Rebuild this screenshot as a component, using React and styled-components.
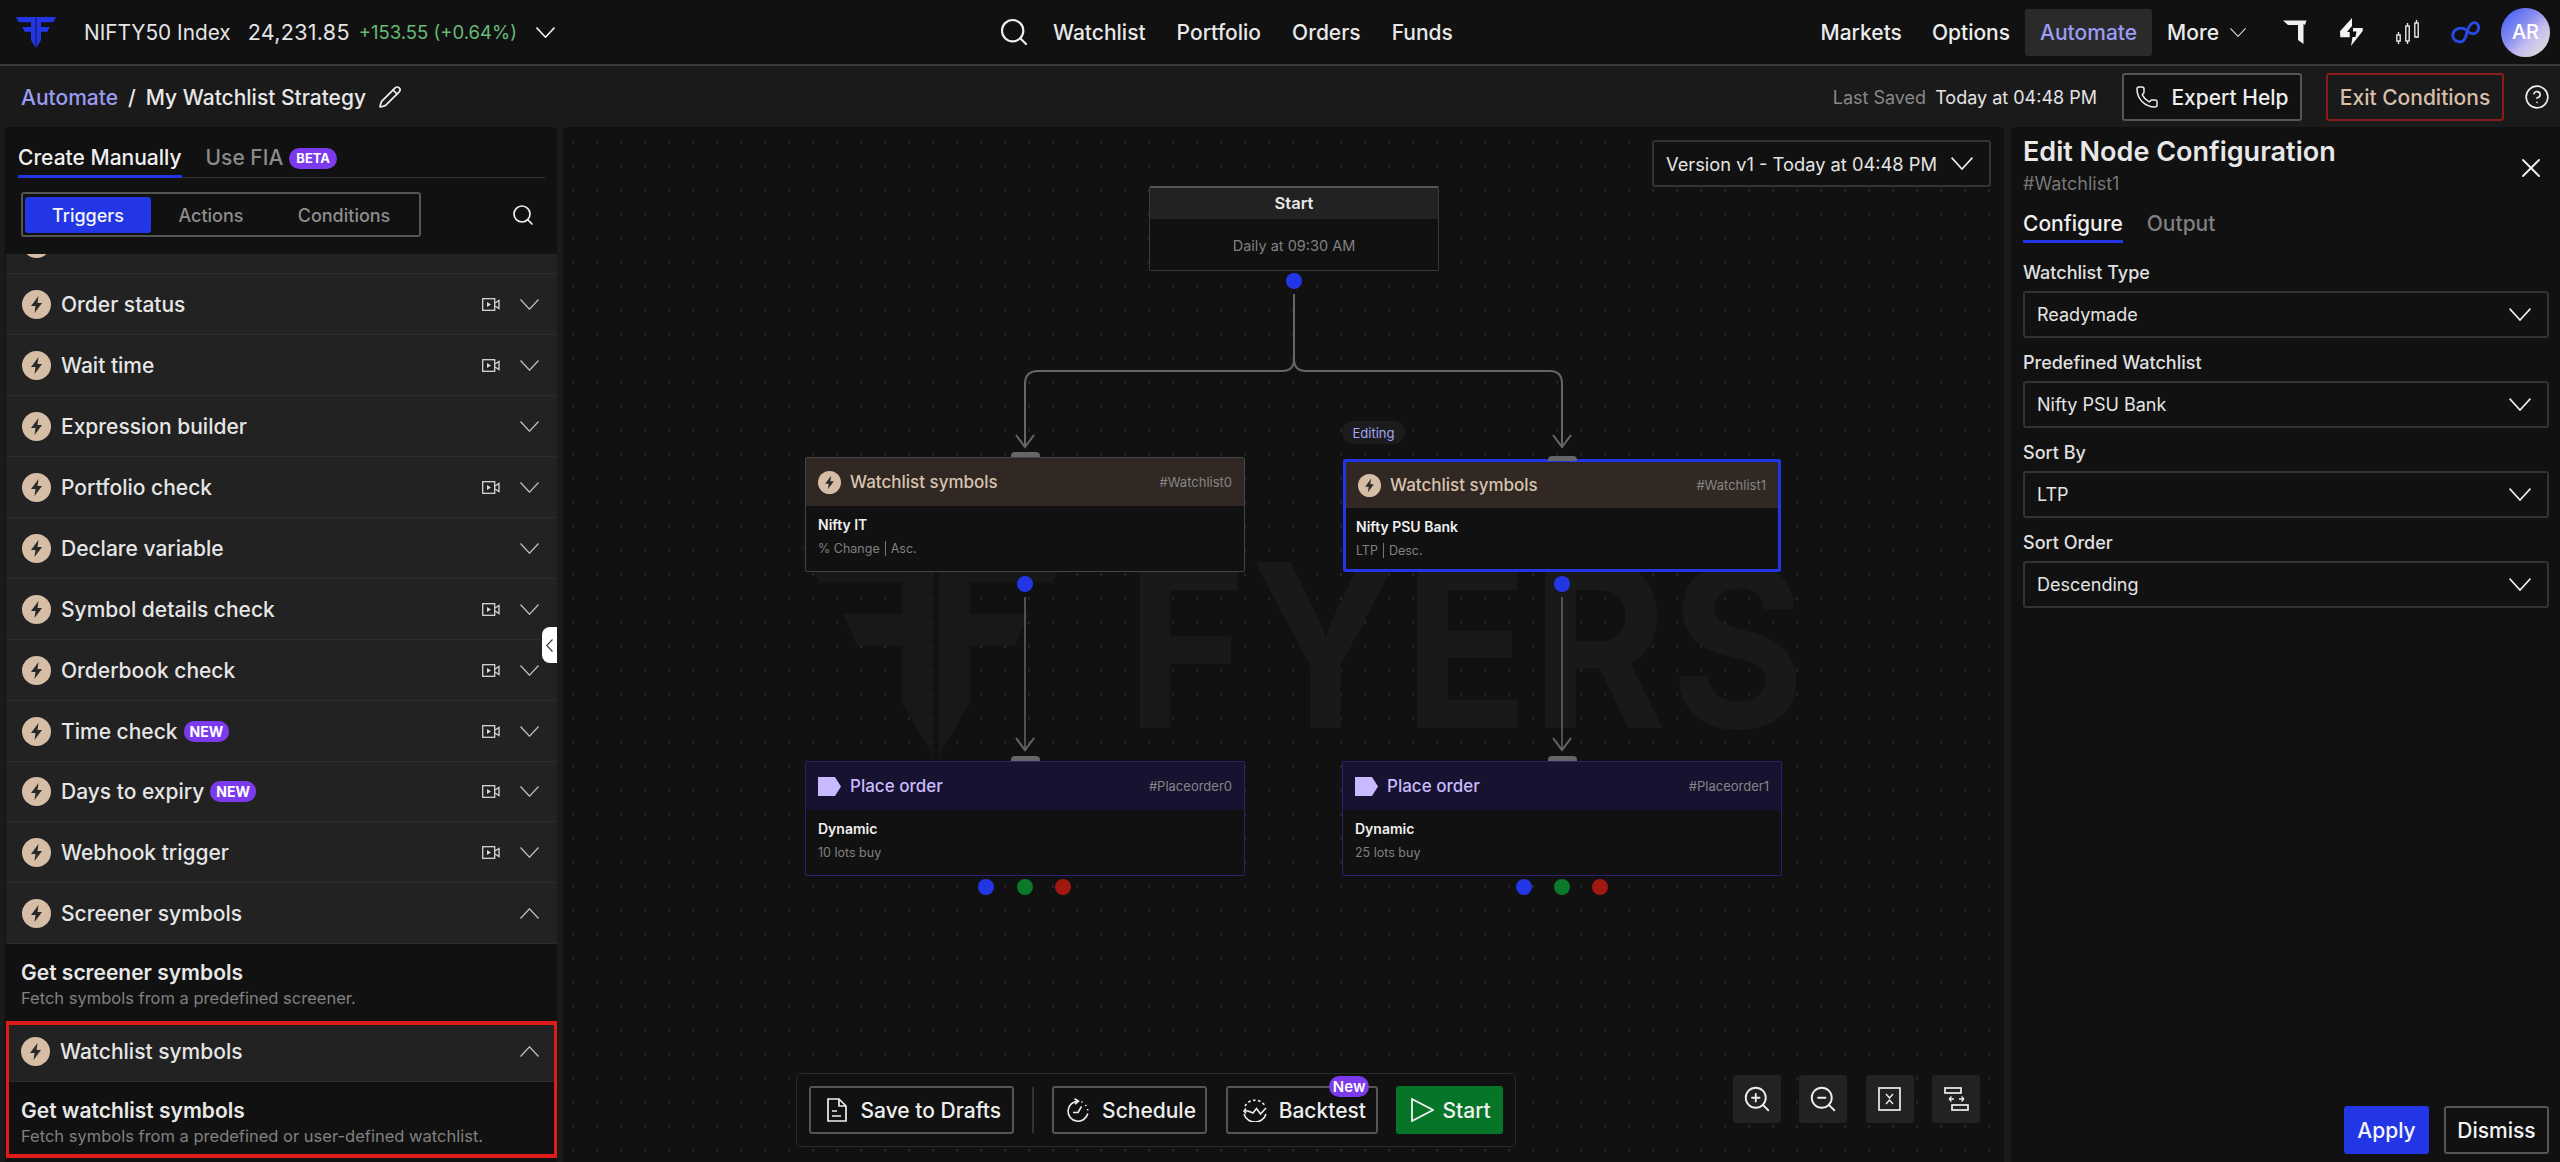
import React from 'react';
import styled, { createGlobalStyle } from 'styled-components';
import { Search, Pencil, Phone, CircleHelp, X, ZoomIn, ZoomOut } from 'lucide-react';

const GlobalStyle = createGlobalStyle`
  html, body { margin: 0; padding: 0; background: #1a1a1a; }
  * { box-sizing: border-box; }
  body { font-family: Inter, "Noto Sans", sans-serif; color: #e8e8e8; }
`;

const Page = styled.div`
  width: 2560px;
  height: 1162px;
  display: flex;
  flex-direction: column;
  overflow: hidden;
`;

const TopBar = styled.header`
  height: 66px;
  flex: none;
  display: flex;
  align-items: center;
  background: #111;
  border-bottom: 2px solid #3a3a3a;
  padding: 0 10px 0 16px;
`;

const LeftGroup = styled.div`
  width: 982px;
  flex: none;
  display: flex;
  align-items: center;
`;

const IndexName = styled.span`
  font-size: 20.8px;
  margin-left: 28px;
  color: #e4e4e4;
`;

const IndexPrice = styled.span`
  font-size: 21.5px;
  letter-spacing: 0.3px;
  margin-left: 17px;
  color: #e4e4e4;
`;

const IndexChange = styled.span`
  font-size: 18.5px;
  margin-left: 9px;
  color: #66bb77;
`;

const CenterGroup = styled.nav`
  display: flex;
  align-items: center;
  gap: 31px;
  flex: 1;
  font-size: 21px;
  font-weight: 500;
`;

const SearchSlot = styled.span`
  display: flex;
  margin-right: -8px;
`;

const RightGroup = styled.div`
  display: flex;
  align-items: center;
`;

const NavLink = styled.span`
  font-size: 21px;
  font-weight: 500;
  color: ${(p) => (p.$active ? '#9a9cf4' : '#ececec')};
  background: ${(p) => (p.$active ? '#2a2a2a' : 'transparent')};
  border-radius: 3px;
  height: 47px;
  display: flex;
  align-items: center;
  padding: 0 15px;
`;

const IconSlot = styled.span`
  display: flex;
  align-items: center;
  justify-content: center;
  margin-left: ${(p) => p.$ml || 0}px;
`;

const Avatar = styled.div`
  width: 49px;
  height: 49px;
  border-radius: 50%;
  margin-left: 21px;
  background: linear-gradient(135deg, #4f68f6 12%, #8b90ef 42%, #c4bcf0 62%, #d8d8dc 85%);
  display: flex;
  align-items: center;
  justify-content: center;
  color: #fff;
  font-size: 20px;
  font-weight: 500;
`;

const SubBar = styled.div`
  height: 61px;
  flex: none;
  display: flex;
  align-items: center;
  padding: 1px 10px 0 21px;
  background: #1a1a1a;
`;

const Crumb = styled.span`
  font-size: 21px;
  font-weight: 500;
  color: ${(p) => (p.$link ? '#9a9cf4' : '#e8e8e8')};
  margin-right: ${(p) => p.$mr || 0}px;
`;

const Spacer = styled.div`
  flex: 1;
`;

const SavedLabel = styled.span`
  font-size: 18px;
  color: #888;
  margin-right: 9px;
`;

const SavedValue = styled.span`
  font-size: 18px;
  color: #e4e4e4;
  margin-right: 25px;
`;

const OutlineButton = styled.button`
  font: 500 21px Inter, sans-serif;
  height: 48px;
  display: flex;
  align-items: center;
  justify-content: center;
  gap: 12px;
  background: #111;
  color: #eee;
  border: 2px solid #555;
  border-radius: 3px;
  padding: 0;
  width: ${(p) => p.$w}px;
`;

const ExitButton = styled(OutlineButton)`
  background: transparent;
  color: #d8bfa8;
  border-color: #8a1c1c;
  margin-left: 24px;
`;

const Body = styled.div`
  flex: 1;
  min-height: 0;
  display: flex;
  padding-left: 5px;
`;

const LeftPanel = styled.aside`
  width: 552px;
  flex: none;
  background: #111;
  border-radius: 4px 4px 0 0;
  display: flex;
  flex-direction: column;
  position: relative;
`;

const TabRow = styled.div`
  display: flex;
  align-items: flex-end;
  height: 51px;
  margin: 0 12px 0 13px;
  border-bottom: 1px solid #333;
  gap: 24px;
`;

const Tab = styled.div`
  padding: 17px 0 4px;
  line-height: 26px;
  font-size: 21px;
  font-weight: 500;
  color: ${(p) => (p.$active ? '#f0f0f0' : '#8a8a8a')};
  border-bottom: ${(p) => (p.$active ? '3px solid #2336e6' : '3px solid transparent')};
  margin-bottom: -1px;
  display: flex;
  gap: 6px;
  align-items: center;
`;

const Beta = styled.span`
  background: #7c3aed;
  color: #fff;
  font-size: 13px;
  font-weight: 700;
  border-radius: 11px;
  padding: 0 7px;
  height: 21px;
  line-height: 21px;
`;

const SegmentRow = styled.div`
  display: flex;
  align-items: center;
  justify-content: space-between;
  padding: 14px 22px 17px 16px;
`;

const Segment = styled.div`
  width: 400px;
  height: 45px;
  border: 2px solid #555;
  border-radius: 3px;
  display: flex;
  align-items: center;
  padding: 0 2px;
`;

const SegmentItem = styled.div`
  height: 36px;
  padding-top: 1px;
  width: ${(p) => p.$w}px;
  display: flex;
  align-items: center;
  justify-content: center;
  font-size: 18px;
  font-weight: 500;
  border-radius: 3px;
  color: ${(p) => (p.$active ? '#f4f4f4' : '#8e8e8e')};
  background: ${(p) => (p.$active ? '#2336e6' : 'transparent')};
`;

const List = styled.div`
  flex: 1;
  min-height: 0;
  overflow: hidden;
  margin-left: 1px;
`;

const Row = styled.div`
  height: 60.9px;
  margin-top: ${(p) => p.$mt || 0}px;
  display: flex;
  align-items: center;
  background: #222;
  border-bottom: 1px solid #2b2b2b;
  padding: 1px 18px 0 16px;
`;

const RowTitle = styled.span`
  font-size: 21px;
  font-weight: 500;
  color: #e6e6e6;
  margin-left: 10px;
`;

const NewBadge = styled.span`
  background: #7c3aed;
  color: #fff;
  font-size: 14px;
  font-weight: 700;
  border-radius: 10px;
  height: 21px;
  line-height: 21px;
  padding: 0 6px;
  margin-left: 6px;
`;

const RowRight = styled.div`
  margin-left: auto;
  display: flex;
  align-items: center;
  gap: 20px;
`;

const Section = styled.div`
  background: #111;
  padding: ${(p) => p.$pad};
  height: ${(p) => p.$h}px;
`;

const ItemTitle = styled.div`
  font-size: 21px;
  font-weight: 600;
  line-height: 26px;
  color: #e8e8e8;
`;

const ItemDesc = styled.div`
  font-size: 16.5px;
  line-height: 20px;
  margin-top: 2px;
  color: #808080;
`;

const Highlight = styled.div`
  position: relative;
  height: 137px;
  margin: 0 -1px;
  ${Row} {
    padding: 1px 19px 0 16px;
  }
`;

const HighlightFrame = styled.div`
  position: absolute;
  inset: 0;
  border: 4px solid #e01b1b;
  pointer-events: none;
`;

const CollapseHandle = styled.div`
  position: absolute;
  right: 0;
  top: 500px;
  width: 15px;
  height: 36px;
  background: #fff;
  border-radius: 8px 0 0 8px;
  display: flex;
  align-items: center;
  justify-content: center;
`;

const Canvas = styled.main`
  width: 1441px;
  flex: none;
  margin-left: 6px;
  margin-right: 7px;
  position: relative;
  overflow: hidden;
  border-radius: 4px 4px 0 0;
  background-color: #111;
  background-image: radial-gradient(circle, #2e2e2e 1px, transparent 1.3px);
  background-size: 24px 24px;
  background-position: -2px 3.5px;
`;

const Wordmark = styled.div`
  position: absolute;
  left: 563px;
  top: 404px;
  font-size: 228px;
  line-height: 1;
  font-weight: 700;
  letter-spacing: 4px;
  color: #191919;
  transform: scaleX(0.9);
  transform-origin: left top;
`;

const WatermarkSlot = styled.div`
  position: absolute;
  left: 237px;
  top: 419px;
  display: flex;
`;

const Edges = styled.svg`
  position: absolute;
  left: 0;
  top: 0;
`;

const VersionSelect = styled.div`
  position: absolute;
  right: 13px;
  top: 13px;
  width: 339px;
  height: 47px;
  background: #111;
  border: 2px solid #333;
  border-radius: 3px;
  display: flex;
  align-items: center;
  justify-content: space-between;
  padding: 0 16px 0 12px;
  font-size: 18.3px;
  color: #e4e4e4;
`;

const StartNode = styled.div`
  position: absolute;
  left: 586px;
  top: 59px;
  width: 290px;
  height: 85px;
  background: #111;
  border: 1px solid #3a3a3a;
  border-top: 2px solid #555;
  border-radius: 2px;
  text-align: center;
`;

const StartHead = styled.div`
  height: 31px;
  background: #222;
  font-size: 16.5px;
  font-weight: 600;
  line-height: 31px;
`;

const StartBody = styled.div`
  font-size: 14.5px;
  color: #808080;
  margin-top: 18px;
`;

const Dot = styled.span`
  position: absolute;
  left: ${(p) => p.$x - 8}px;
  top: ${(p) => p.$y - 8}px;
  width: 16px;
  height: 16px;
  border-radius: 50%;
  background: ${(p) => p.$color};
`;

const Node = styled.div`
  position: absolute;
  left: ${(p) => p.$x}px;
  top: ${(p) => p.$y}px;
  width: ${(p) => p.$w}px;
  height: ${(p) => p.$h}px;
  background: #111;
  border: ${(p) => p.$border};
  border-radius: 2px;
  &::before {
    content: '';
    position: absolute;
    left: 50%;
    top: -6px;
    margin-left: -14.5px;
    width: 29px;
    height: 5px;
    background: #666;
    border-radius: 4px 4px 0 0;
  }
`;

const NodeHead = styled.div`
  height: ${(p) => p.$h || 48}px;
  background: ${(p) => p.$bg};
  display: flex;
  align-items: center;
  padding: 0 12px;
`;

const NodeTitle = styled.span`
  font-size: 17px;
  font-weight: 500;
  margin-left: 9px;
  color: ${(p) => p.$color};
`;

const NodeTag = styled.span`
  margin-left: auto;
  font-size: 13px;
  color: #858585;
`;

const NodeBody = styled.div`
  padding: 10px ${(p) => p.$pad || 12}px;
`;

const NodeValue = styled.div`
  font-size: 14px;
  font-weight: 600;
  line-height: 18px;
  color: #f0f0f0;
`;

const NodeMeta = styled.div`
  font-size: 12.5px;
  line-height: 18px;
  margin-top: 6px;
  color: #808080;
`;

const MetaSep = styled.span`
  border-left: 1px solid #777;
  margin: 0 5px;
`;

const EditingPill = styled.span`
  position: absolute;
  left: 779px;
  top: 294px;
  width: 63px;
  height: 23px;
  border-radius: 12px;
  background: #1c1c1c;
  color: #a5a6f5;
  font-size: 13px;
  display: flex;
  align-items: center;
  justify-content: center;
`;

const Toolbar = styled.div`
  position: absolute;
  left: 233px;
  bottom: 15px;
  width: 720px;
  height: 74px;
  border: 1px solid #2b2b2b;
  border-radius: 5px;
  display: flex;
  align-items: center;
  padding: 0 12px;
  background: #111;
`;

const ToolButton = styled.button`
  font: 500 21px Inter, sans-serif;
  color: ${(p) => (p.$start ? '#f2f2f2' : '#eee')};
  height: 48px;
  width: ${(p) => p.$w}px;
  margin-left: ${(p) => p.$ml || 0}px;
  background: ${(p) => (p.$start ? '#067528' : '#111')};
  border: ${(p) => (p.$start ? 'none' : '2px solid #555')};
  border-radius: 3px;
  padding: 0 0 0 ${(p) => p.$pl || 0}px;
  display: flex;
  align-items: center;
  justify-content: center;
  gap: ${(p) => p.$gap || 12}px;
  position: relative;
`;

const ToolDivider = styled.div`
  width: 2px;
  height: 46px;
  background: #333;
  margin-left: 18px;
`;

const NewTag = styled.span`
  position: absolute;
  right: 7px;
  top: -12px;
  width: 40px;
  height: 21px;
  border-radius: 11px;
  background: #7c3aed;
  color: #fff;
  font-size: 15px;
  font-weight: 600;
  display: flex;
  align-items: center;
  justify-content: center;
`;

const ZoomBar = styled.div`
  position: absolute;
  right: 24px;
  bottom: 39px;
  display: flex;
  gap: 18.5px;
`;

const ZoomButton = styled.div`
  width: 48px;
  height: 48px;
  background: #222;
  border-radius: 3px;
  display: flex;
  align-items: center;
  justify-content: center;
  color: #eee;
`;

const RightPanel = styled.aside`
  width: 549px;
  flex: none;
  background: #111;
  border-radius: 4px 0 0 0;
  padding: 8px 11px 8px 12px;
  display: flex;
  flex-direction: column;
  position: relative;
`;

const PanelTitle = styled.h2`
  margin: 0;
  font-size: 27px;
  line-height: 33px;
  font-weight: 600;
  color: #e8e8e8;
`;

const PanelSub = styled.div`
  font-size: 18px;
  line-height: 22px;
  margin-top: 5px;
  color: #777;
`;

const CloseSlot = styled.span`
  position: absolute;
  right: 13px;
  top: 25px;
  color: #eee;
  display: flex;
`;

const PanelTabs = styled.div`
  display: flex;
  gap: 24px;
  margin-top: 14px;
`;

const PanelTab = styled.div`
  font-size: 21px;
  font-weight: 500;
  height: 34px;
  line-height: 29px;
  color: ${(p) => (p.$active ? '#f0f0f0' : '#808080')};
  border-bottom: ${(p) => (p.$active ? '3px solid #2336e6' : 'none')};
`;

const Fields = styled.div`
  margin-top: 19px;
`;

const Field = styled.div`
  margin-bottom: 14px;
`;

const FieldLabel = styled.div`
  font-size: 18px;
  font-weight: 500;
  line-height: 22px;
  color: #e0e0e0;
  margin-bottom: 7px;
`;

const FieldSelect = styled.div`
  height: 47px;
  border: 2px solid #333;
  border-radius: 3px;
  display: flex;
  align-items: center;
  justify-content: space-between;
  padding: 0 16px 0 12px;
  font-size: 18px;
  color: #e4e4e4;
`;

const PanelActions = styled.div`
  margin-top: auto;
  display: flex;
  justify-content: flex-end;
  gap: 15px;
`;

const ApplyButton = styled.button`
  font: 500 21px Inter, sans-serif;
  width: 85px;
  height: 48px;
  padding: 0;
  color: #f4f4f4;
  background: #2336e6;
  border: none;
  border-radius: 3px;
`;

const DismissButton = styled(ApplyButton)`
  width: 105px;
  background: #111;
  border: 2px solid #555;
`;

const Chevron = ({ w = 19, h = 11, up, color = '#bdbdbd', sw = 1.3 }) => (
  <svg width={w} height={h} viewBox="0 0 19 11" preserveAspectRatio="none" fill="none" stroke={color} strokeWidth={sw}>
    <polyline points={up ? '0.5,10.5 9.5,0.8 18.5,10.5' : '0.5,0.5 9.5,10.2 18.5,0.5'} />
  </svg>
);

const ChevronLeftThin = () => (
  <svg width="7" height="13" viewBox="0 0 7 13" fill="none" stroke="#333" strokeWidth="1.1">
    <polyline points="6.5,0.5 0.7,6.5 6.5,12.5" />
  </svg>
);

const BoltBadge = ({ size = 29, bolt = '#2a2a2a' }) => (
  <svg width={size} height={size} viewBox="0 0 29 29">
    <circle cx="14.5" cy="14.5" r="14.5" fill="#d6bda6" />
    <path d="M16.5 6 L9 16 H13.5 L12.5 23 L20 13 H15.5 Z" fill={bolt} />
  </svg>
);

const VideoIcon = () => (
  <svg width="18" height="13" viewBox="0 0 18 13" fill="none" stroke="#d8d8d8" strokeWidth="1.3">
    <rect x="0.7" y="0.7" width="12" height="11.6" />
    <path d="M5 4 L9 6.5 L5 9 Z" fill="#d8d8d8" stroke="none" />
    <path d="M13 5 L17 2.5 V10.5 L13 8" />
  </svg>
);

const FyersMark = ({ w, h, color }) => (
  <svg width={w} height={h} viewBox="0 0 40 31" fill={color}>
    <path d="M0 0 H19.6 V31 L15 23 V14.7 H8.5 L6.3 10 H15 V5.3 H2.8 Z" />
    <path d="M40 0 H20.4 V31 L25 23 V14.7 H31.5 L33.7 10 H25 V5.3 H37.2 Z" />
  </svg>
);

const TIcon = () => (
  <svg width="24" height="24" viewBox="0 0 24 24" fill="#f0f0f0">
    <path d="M0 0.5 H23.5 L22 5 L20.5 4 V24 L15 20 V5 H5 Z" />
  </svg>
);

const BoltIcon = () => (
  <svg width="23" height="28" viewBox="0 0 23 28" fill="#f4f4f4">
    <path d="M12 0 L0 13.3 L0.3 19.3 H9.7 V14 H7 L12 8 Z" />
    <path d="M13 10 H22.7 V13 L11 28 L12.5 19 H15.5 L16.5 13.5 H13 Z" />
  </svg>
);

const CandleIcon = () => (
  <svg width="23" height="24" viewBox="0 0 23 24" fill="none" stroke="#e8e8e8" strokeWidth="1.4">
    <path d="M2.5 12 V24 M11.5 3 V24 M20.5 0 V18" />
    <rect x="0.8" y="15" width="3.4" height="6" fill="#111" />
    <rect x="9.8" y="6" width="3.4" height="15" fill="#111" />
    <rect x="18.8" y="3" width="3.4" height="14" fill="#111" />
  </svg>
);

const LoopIcon = () => (
  <svg width="29" height="23" viewBox="0 0 29 23" fill="none" stroke="#2a4ae8" strokeWidth="2.8">
    <path d="M15.5 9.5 C12.5 5.5 3 6.5 1.8 13.5 C1 20 11 24.5 14.5 16.5 L16.5 9.5 C18 4 21.5 1 24.5 1.8 C28.5 3 28.5 9 25.5 11.5 C23 13.5 19 13 17.5 10.5" />
  </svg>
);

const DocIcon = () => (
  <svg width="20" height="24" viewBox="0 0 20 24" fill="none" stroke="#eee" strokeWidth="1.7">
    <path d="M1 1 H12 L19 8 V23 H1 Z" />
    <path d="M12 1 V8 H19" />
    <path d="M5 13 H10 M5 18 H14" />
  </svg>
);

const ScheduleIcon = () => (
  <svg width="22" height="24" viewBox="0 0 22 24" fill="none" stroke="#eee" strokeWidth="1.6">
    <path d="M11 3.2 A10 10 0 1 0 20.8 15.5" />
    <path d="M7.5 0.7 L11.5 3.2 L8 6.2" />
    <path d="M14.5 3.8 L15.5 4.4 M18.5 7 L19.2 8 M20.6 11 L20.8 12.3" />
    <path d="M6 14.5 H11 L14.5 8.5" />
  </svg>
);

const BacktestIcon = () => (
  <svg width="24" height="24" viewBox="0 0 24 24" fill="none" stroke="#eee" strokeWidth="1.6">
    <path d="M2 8 A11.5 11.5 0 0 1 22 8" strokeDasharray="2.6 2.4" />
    <path d="M1 13 H5 L10 15 L13.5 10.5 L17.5 16 L23 10" />
    <path d="M3 10.5 L1 13 L3 15.5" />
    <path d="M1 16 A11.5 11.5 0 0 0 23 16" />
  </svg>
);

const PlayOutline = () => (
  <svg width="23" height="24" viewBox="0 0 23 24" fill="none" stroke="#f2f2f2" strokeWidth="1.8">
    <path d="M1 1 L22 12 L1 23 Z" />
  </svg>
);

const FitIcon = () => (
  <svg width="23" height="24" viewBox="0 0 23 24" fill="none" stroke="#eee" strokeWidth="1.7">
    <rect x="1" y="1" width="21" height="22" />
    <path d="M8 7 L11.5 11 L15 7 M8 17 L11.5 13 L15 17" strokeWidth="1.4" />
  </svg>
);

const LayoutIcon = () => (
  <svg width="25" height="24" viewBox="0 0 25 24" fill="none" stroke="#eee" strokeWidth="1.7">
    <rect x="1" y="1" width="16" height="5" />
    <rect x="8" y="18" width="16" height="5" />
    <path d="M5 12 H10 M5 12 L7.5 9.5 M5 12 L7.5 14.5 M15 12 H20 M20 12 L17.5 9.5 M20 12 L17.5 14.5" strokeWidth="1.3" />
  </svg>
);

const OrderTag = () => (
  <svg width="23" height="19" viewBox="0 0 23 19" fill="#c9baff">
    <path d="M0 0 H17 L23 9.5 L17 19 H0 Z" />
  </svg>
);

const triggers = [
  { name: 'Order status', video: true },
  { name: 'Wait time', video: true },
  { name: 'Expression builder' },
  { name: 'Portfolio check', video: true },
  { name: 'Declare variable' },
  { name: 'Symbol details check', video: true },
  { name: 'Orderbook check', video: true },
  { name: 'Time check', video: true, isNew: true },
  { name: 'Days to expiry', video: true, isNew: true },
  { name: 'Webhook trigger', video: true },
];

const fields = [
  { label: 'Watchlist Type', value: 'Readymade' },
  { label: 'Predefined Watchlist', value: 'Nifty PSU Bank' },
  { label: 'Sort By', value: 'LTP' },
  { label: 'Sort Order', value: 'Descending' },
];

const TriggerRow = ({ name, video, isNew, up, mt }) => (
  <Row $mt={mt}>
    <BoltBadge />
    {name && <RowTitle>{name}</RowTitle>}
    {isNew && <NewBadge>NEW</NewBadge>}
    <RowRight>
      {video && <VideoIcon />}
      <Chevron up={up} />
    </RowRight>
  </Row>
);

const WatchNode = ({ x, y, w, h, border, headH, bodyPad, tag, value, children }) => (
  <Node $x={x} $y={y} $w={w} $h={h} $border={border}>
    <NodeHead $bg="#312823" $h={headH}>
      <BoltBadge size={23} />
      <NodeTitle $color="#d8c4b0">Watchlist symbols</NodeTitle>
      <NodeTag>{tag}</NodeTag>
    </NodeHead>
    <NodeBody $pad={bodyPad}>
      <NodeValue>{value}</NodeValue>
      <NodeMeta>{children}</NodeMeta>
    </NodeBody>
  </Node>
);

const OrderNode = ({ x, tag, meta }) => (
  <Node $x={x} $y={634} $w={440} $h={115} $border="1px solid #2e2070">
    <NodeHead $bg="#17122f">
      <OrderTag />
      <NodeTitle $color="#c9baff">Place order</NodeTitle>
      <NodeTag>{tag}</NodeTag>
    </NodeHead>
    <NodeBody>
      <NodeValue>Dynamic</NodeValue>
      <NodeMeta>{meta}</NodeMeta>
    </NodeBody>
  </Node>
);

export default function App() {
  return (
    <Page>
      <GlobalStyle />
      <TopBar>
        <LeftGroup>
          <FyersMark w={40} h={31} color="#2336e6" />
          <IndexName>NIFTY50 Index</IndexName>
          <IndexPrice>24,231.85</IndexPrice>
          <IndexChange>+153.55 (+0.64%)</IndexChange>
          <IconSlot $ml={19}><Chevron w={19} h={11} color="#eee" sw={1.6} /></IconSlot>
        </LeftGroup>
        <CenterGroup>
          <SearchSlot><Search size={32} strokeWidth={1.6} color="#eee" /></SearchSlot>
          <span>Watchlist</span>
          <span>Portfolio</span>
          <span>Orders</span>
          <span>Funds</span>
        </CenterGroup>
        <RightGroup>
          <NavLink>Markets</NavLink>
          <NavLink>Options</NavLink>
          <NavLink $active>Automate</NavLink>
          <NavLink>More</NavLink>
          <IconSlot $ml={-4}><Chevron w={16} h={9} color="#ddd" /></IconSlot>
          <IconSlot $ml={37}><TIcon /></IconSlot>
          <IconSlot $ml={33}><BoltIcon /></IconSlot>
          <IconSlot $ml={33}><CandleIcon /></IconSlot>
          <IconSlot $ml={32}><LoopIcon /></IconSlot>
          <Avatar>AR</Avatar>
        </RightGroup>
      </TopBar>
      <SubBar>
        <Crumb $link $mr={10}>Automate</Crumb>
        <Crumb $mr={10}>/</Crumb>
        <Crumb $mr={12}>My Watchlist Strategy</Crumb>
        <Pencil size={24} strokeWidth={1.7} color="#eee" />
        <Spacer />
        <SavedLabel>Last Saved</SavedLabel>
        <SavedValue>Today at 04:48 PM</SavedValue>
        <OutlineButton $w={180}>
          <Phone size={24} strokeWidth={1.5} />
          Expert Help
        </OutlineButton>
        <ExitButton $w={178}>Exit Conditions</ExitButton>
        <IconSlot $ml={20}><CircleHelp size={26} strokeWidth={1.5} color="#eee" /></IconSlot>
      </SubBar>
      <Body>
        <LeftPanel>
          <TabRow>
            <Tab $active>Create Manually</Tab>
            <Tab>Use FIA<Beta>BETA</Beta></Tab>
          </TabRow>
          <SegmentRow>
            <Segment>
              <SegmentItem $active $w={126}>Triggers</SegmentItem>
              <SegmentItem $w={120}>Actions</SegmentItem>
              <SegmentItem $w={146}>Conditions</SegmentItem>
            </Segment>
            <Search size={24} strokeWidth={1.7} color="#eee" />
          </SegmentRow>
          <List>
            <TriggerRow mt={-40.5} />
            {triggers.map((t) => (
              <TriggerRow key={t.name} {...t} />
            ))}
            <TriggerRow name="Screener symbols" up />
            <Section $h={77} $pad="16px 16px 0 15px">
              <ItemTitle>Get screener symbols</ItemTitle>
              <ItemDesc>Fetch symbols from a predefined screener.</ItemDesc>
            </Section>
            <Highlight>
              <TriggerRow name="Watchlist symbols" up />
              <Section $h={76} $pad="16px 16px 0 16px">
                <ItemTitle>Get watchlist symbols</ItemTitle>
                <ItemDesc>Fetch symbols from a predefined or user-defined watchlist.</ItemDesc>
              </Section>
              <HighlightFrame />
            </Highlight>
          </List>
          <CollapseHandle>
            <ChevronLeftThin />
          </CollapseHandle>
        </LeftPanel>
        <Canvas>
          <Wordmark>FYERS</Wordmark>
          <WatermarkSlot><FyersMark w={272} h={211} color="#181818" /></WatermarkSlot>
          <Edges width="1441" height="1035" fill="none" stroke="#666" strokeWidth="2">
            <path d="M731 167 V232 Q731 244 719 244 H475 Q462 244 462 257 V319" />
            <path d="M731 167 V232 Q731 244 743 244 H987 Q999 244 999 257 V319" />
            <path d="M453 308 L462 320 L471 308" />
            <path d="M990 308 L999 320 L1008 308" />
            <path d="M462 470 V622 M999 470 V622" strokeWidth="1.5" />
            <path d="M453 611 L462 623 L471 611" />
            <path d="M990 611 L999 623 L1008 611" />
          </Edges>
          <VersionSelect>
            Version v1 - Today at 04:48 PM
            <Chevron w={22} h={13} color="#eee" sw={1.4} />
          </VersionSelect>
          <StartNode>
            <StartHead>Start</StartHead>
            <StartBody>Daily at 09:30 AM</StartBody>
          </StartNode>
          <Dot $x={731} $y={154} $color="#2336e6" />
          <WatchNode x={242} y={330} w={440} h={115} border="1px solid #444" tag="#Watchlist0" value="Nifty IT">
            % Change<MetaSep />Asc.
          </WatchNode>
          <EditingPill>Editing</EditingPill>
          <WatchNode x={780} y={332} w={438} h={113} headH={46} bodyPad={10} border="3px solid #2336e6" tag="#Watchlist1" value="Nifty PSU Bank">
            LTP<MetaSep />Desc.
          </WatchNode>
          <Dot $x={462} $y={457} $color="#2336e6" />
          <Dot $x={999} $y={457} $color="#2336e6" />
          <OrderNode x={242} tag="#Placeorder0" meta="10 lots buy" />
          <OrderNode x={779} tag="#Placeorder1" meta="25 lots buy" />
          <Dot $x={423} $y={760} $color="#2336e6" />
          <Dot $x={462} $y={760} $color="#0a7a2a" />
          <Dot $x={500} $y={760} $color="#a01810" />
          <Dot $x={961} $y={760} $color="#2336e6" />
          <Dot $x={999} $y={760} $color="#0a7a2a" />
          <Dot $x={1037} $y={760} $color="#a01810" />
          <Toolbar>
            <ToolButton $w={205} $gap={14} $pl={5}>
              <DocIcon />
              Save to Drafts
            </ToolButton>
            <ToolDivider />
            <ToolButton $w={156} $ml={18} $gap={13} $pl={4}>
              <ScheduleIcon />
              Schedule
            </ToolButton>
            <ToolButton $w={152} $ml={19} $gap={12} $pl={4}>
              <BacktestIcon />
              Backtest
              <NewTag>New</NewTag>
            </ToolButton>
            <ToolButton $w={107} $ml={18} $gap={8} $pl={3} $start>
              <PlayOutline />
              Start
            </ToolButton>
          </Toolbar>
          <ZoomBar>
            <ZoomButton><ZoomIn size={30} strokeWidth={1.5} /></ZoomButton>
            <ZoomButton><ZoomOut size={30} strokeWidth={1.5} /></ZoomButton>
            <ZoomButton><FitIcon /></ZoomButton>
            <ZoomButton><LayoutIcon /></ZoomButton>
          </ZoomBar>
        </Canvas>
        <RightPanel>
          <PanelTitle>Edit Node Configuration</PanelTitle>
          <PanelSub>#Watchlist1</PanelSub>
          <CloseSlot><X size={32} strokeWidth={1.4} /></CloseSlot>
          <PanelTabs>
            <PanelTab $active>Configure</PanelTab>
            <PanelTab>Output</PanelTab>
          </PanelTabs>
          <Fields>
            {fields.map((f) => (
              <Field key={f.label}>
                <FieldLabel>{f.label}</FieldLabel>
                <FieldSelect>
                  {f.value}
                  <Chevron w={22} h={13} color="#eee" sw={1.4} />
                </FieldSelect>
              </Field>
            ))}
          </Fields>
          <PanelActions>
            <ApplyButton>Apply</ApplyButton>
            <DismissButton>Dismiss</DismissButton>
          </PanelActions>
        </RightPanel>
      </Body>
    </Page>
  );
}
